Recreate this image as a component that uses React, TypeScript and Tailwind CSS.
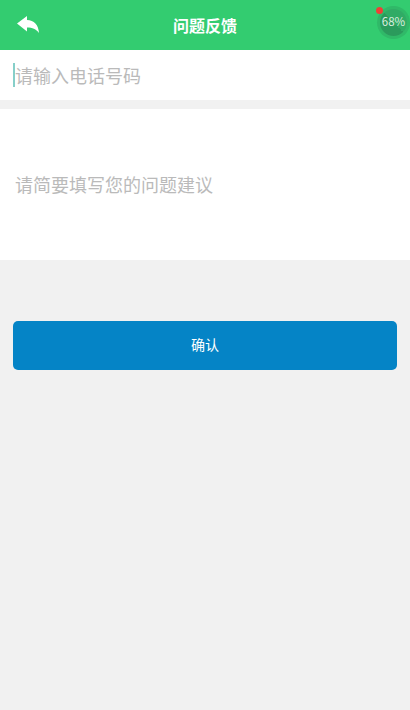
const font = { fontFamily: '"Noto Sans CJK SC", "Noto Sans", sans-serif' };

export default function App() {
    return (
        <div className="relative flex h-[710px] w-[410px] flex-col overflow-hidden bg-[#f1f1f1]" style={font}>
            {/* Header */}
            <header className="relative flex h-[50px] items-center justify-center bg-[#33cc70]">
                <svg className="absolute left-[17px] top-[16px]" width="22" height="17" viewBox="0 0 22 17" fill="white">
                    <path d="M0 7.500 L10 0 L10 4 C17 4 21.500 9 22 17 C19 13 15.500 11.500 10 11.500 L10 15.500 Z" />
                </svg>
                <span className="-mt-[1px] text-[16px] font-bold text-white">问题反馈</span>
            </header>

            {/* Floating battery badge */}
            <div className="absolute left-[377px] top-[6px] flex h-[33px] w-[33px] items-center justify-center rounded-full bg-[#30b968]">
                <div className="flex h-[27px] w-[27px] items-center justify-center rounded-full bg-gradient-to-tr from-[#2b9a5c] from-50% to-[#30ab65] to-50%">
                    <span className="-mt-[2px] whitespace-nowrap text-[11.500px] text-[#d8ecdf]">68%</span>
                </div>
            </div>
            <div className="absolute left-[376px] top-[7px] h-[7px] w-[7px] rounded-full bg-[#ee4036]" />

            {/* Phone */}
            <div className="flex h-[50px] items-center bg-white pl-[13px]">
                <div className="h-[24px] w-[2px] bg-[#86cfc9]" />
                <span className="text-[18px] text-[#bababa]">请输入电话号码</span>
            </div>

            {/* Suggestion */}
            <div className="mt-[9px] flex h-[151px] items-center bg-white pl-[15px]">
                <span className="-mt-[1px] text-[18px] text-[#bababa]">请简要填写您的问题建议</span>
            </div>

            {/* Confirm */}
            <div className="mt-[61px] px-[13px]">
                <button className="flex h-[49px] w-full items-center justify-center rounded-[5px] bg-[#0584c6] pb-[2px] text-[14px] text-white">
                    确认
                </button>
            </div>
        </div>
    );
}
